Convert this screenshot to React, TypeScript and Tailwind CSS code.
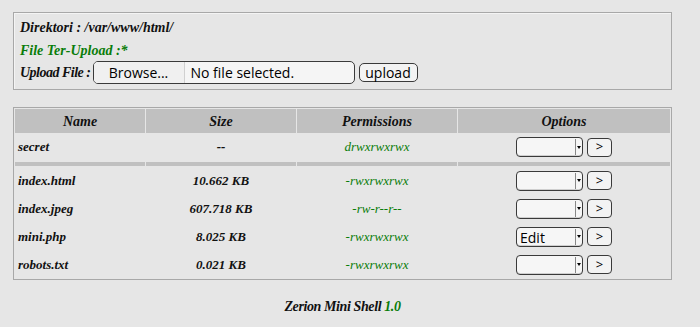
import React from "react";

const font = { fontFamily: '"Liberation Serif", "DejaVu Serif", serif' };
const sans = { fontFamily: '"Open Sans", "DejaVu Sans", sans-serif' };

function Sel({ value }: { value?: string }) {
  return (
    <div className="flex items-center gap-[4px]">
      <div className="relative w-[67px] h-[20px] rounded-[4px] border border-[#3a3a3a] bg-[#f6f6f6] shadow-[inset_0_-1px_0_#cfcfcf]">
        <span className="absolute left-[3px] top-[0px] text-[14px] leading-[19px] text-black not-italic font-normal" style={sans}>
          {value}
        </span>
        <div className="absolute right-[1px] top-[1px] bottom-[1px] w-[6px] border-l border-[#888] flex items-center justify-center">
          <div className="w-0 h-0 border-l-[2px] border-r-[2px] border-t-[3px] border-l-transparent border-r-transparent border-t-black" />
        </div>
      </div>
      <div className="w-[25px] h-[19px] rounded-[4px] border border-[#3a3a3a] bg-[#f3f3f3] flex items-center justify-center text-[13px] text-black not-italic font-normal" style={sans}>
        &gt;
      </div>
    </div>
  );
}

const rows = [
  { name: "index.html", size: "10.662 KB", perm: "-rwxrwxrwx" },
  { name: "index.jpeg", size: "607.718 KB", perm: "-rw-r--r--" },
  { name: "mini.php", size: "8.025 KB", perm: "-rwxrwxrwx", sel: "Edit" },
  { name: "robots.txt", size: "0.021 KB", perm: "-rwxrwxrwx" },
];

export default function App() {
  return (
    <div className="w-[700px] h-[327px] bg-[#e6e6e6] pt-[12px] pl-[13px] text-[13px] italic font-bold text-[#111]" style={font}>
      <div className="w-[659px] h-[78px] border border-[#a8a8a8] shadow-[inset_1px_1px_0_#f4f4f4] px-[6px] pt-[5px]">
        <div className="h-[20px] leading-[20px] text-[14px]">Direktori : /var/www/html/</div>
        <div className="h-[21px] leading-[22px] mt-[2px] text-[14px] text-[#0a7d0a]">File Ter-Upload :*</div>
        <div className="flex items-center h-[23px]">
          <span className="mr-[2px] text-[14px] tracking-[-0.5px]">Upload File :</span>
          <div className="flex items-center w-[262px] h-[23px] rounded-[5px] border border-[#3a3a3a] bg-[#f5f5f5] overflow-hidden not-italic font-normal text-[14px] text-black tracking-normal" style={sans}>
            <div className="w-[91px] h-full bg-[#f0f0f0] border-r border-[#d0d0d0] flex items-center justify-center">Browse...</div>
            <div className="pl-[6px]">No file selected.</div>
          </div>
          <div className="ml-[4px] w-[59px] h-[19px] rounded-[5px] border border-[#3a3a3a] bg-[#f3f3f3] flex items-center justify-center not-italic font-normal text-[14px] text-black" style={sans}>
            upload
          </div>
        </div>
      </div>

      <table className="mt-[17px] w-[659px] border border-[#a8a8a8] border-separate [border-spacing:1px] table-fixed">
        <colgroup>
          <col className="w-[130px]" />
          <col className="w-[150px]" />
          <col className="w-[160px]" />
          <col />
        </colgroup>
        <thead>
          <tr className="h-[24px]">
            <th className="bg-[#c0c0c0] font-bold text-center text-[14px]">Name</th>
            <th className="bg-[#c0c0c0] font-bold text-center text-[14px]">Size</th>
            <th className="bg-[#c0c0c0] font-bold text-center text-[14px]">Permissions</th>
            <th className="bg-[#c0c0c0] font-bold text-center text-[14px]">Options</th>
          </tr>
        </thead>
        <tbody>
          <tr className="h-[27px]">
            <td className="pl-[3px] pb-[2px]">secret</td>
            <td className="text-center pb-[2px]">--</td>
            <td className="text-center text-[#0a7d0a] font-normal pb-[2px]">drwxrwxrwx</td>
            <td className="pb-[1px]">
              <div className="flex justify-center"><Sel /></div>
            </td>
          </tr>
          <tr className="h-[4px]">
            <td className="bg-[#c0c0c0] p-0 h-[4px]" />
            <td className="bg-[#c0c0c0] p-0 h-[4px]" />
            <td className="bg-[#c0c0c0] p-0 h-[4px]" />
            <td className="bg-[#c0c0c0] p-0 h-[4px]" />
          </tr>
          {rows.map((r) => (
            <tr key={r.name} className="h-[27px]">
              <td className="pl-[3px]">{r.name}</td>
              <td className="text-center">{r.size}</td>
              <td className="text-center text-[#0a7d0a] font-normal">{r.perm}</td>
              <td>
                <div className="flex justify-center"><Sel value={r.sel} /></div>
              </td>
            </tr>
          ))}
        </tbody>
      </table>

      <div className="w-[659px] text-center mt-[16px] text-[14px] tracking-[-0.4px]">
        Zerion Mini Shell <span className="text-[#0a7d0a]">1.0</span>
      </div>
    </div>
  );
}
